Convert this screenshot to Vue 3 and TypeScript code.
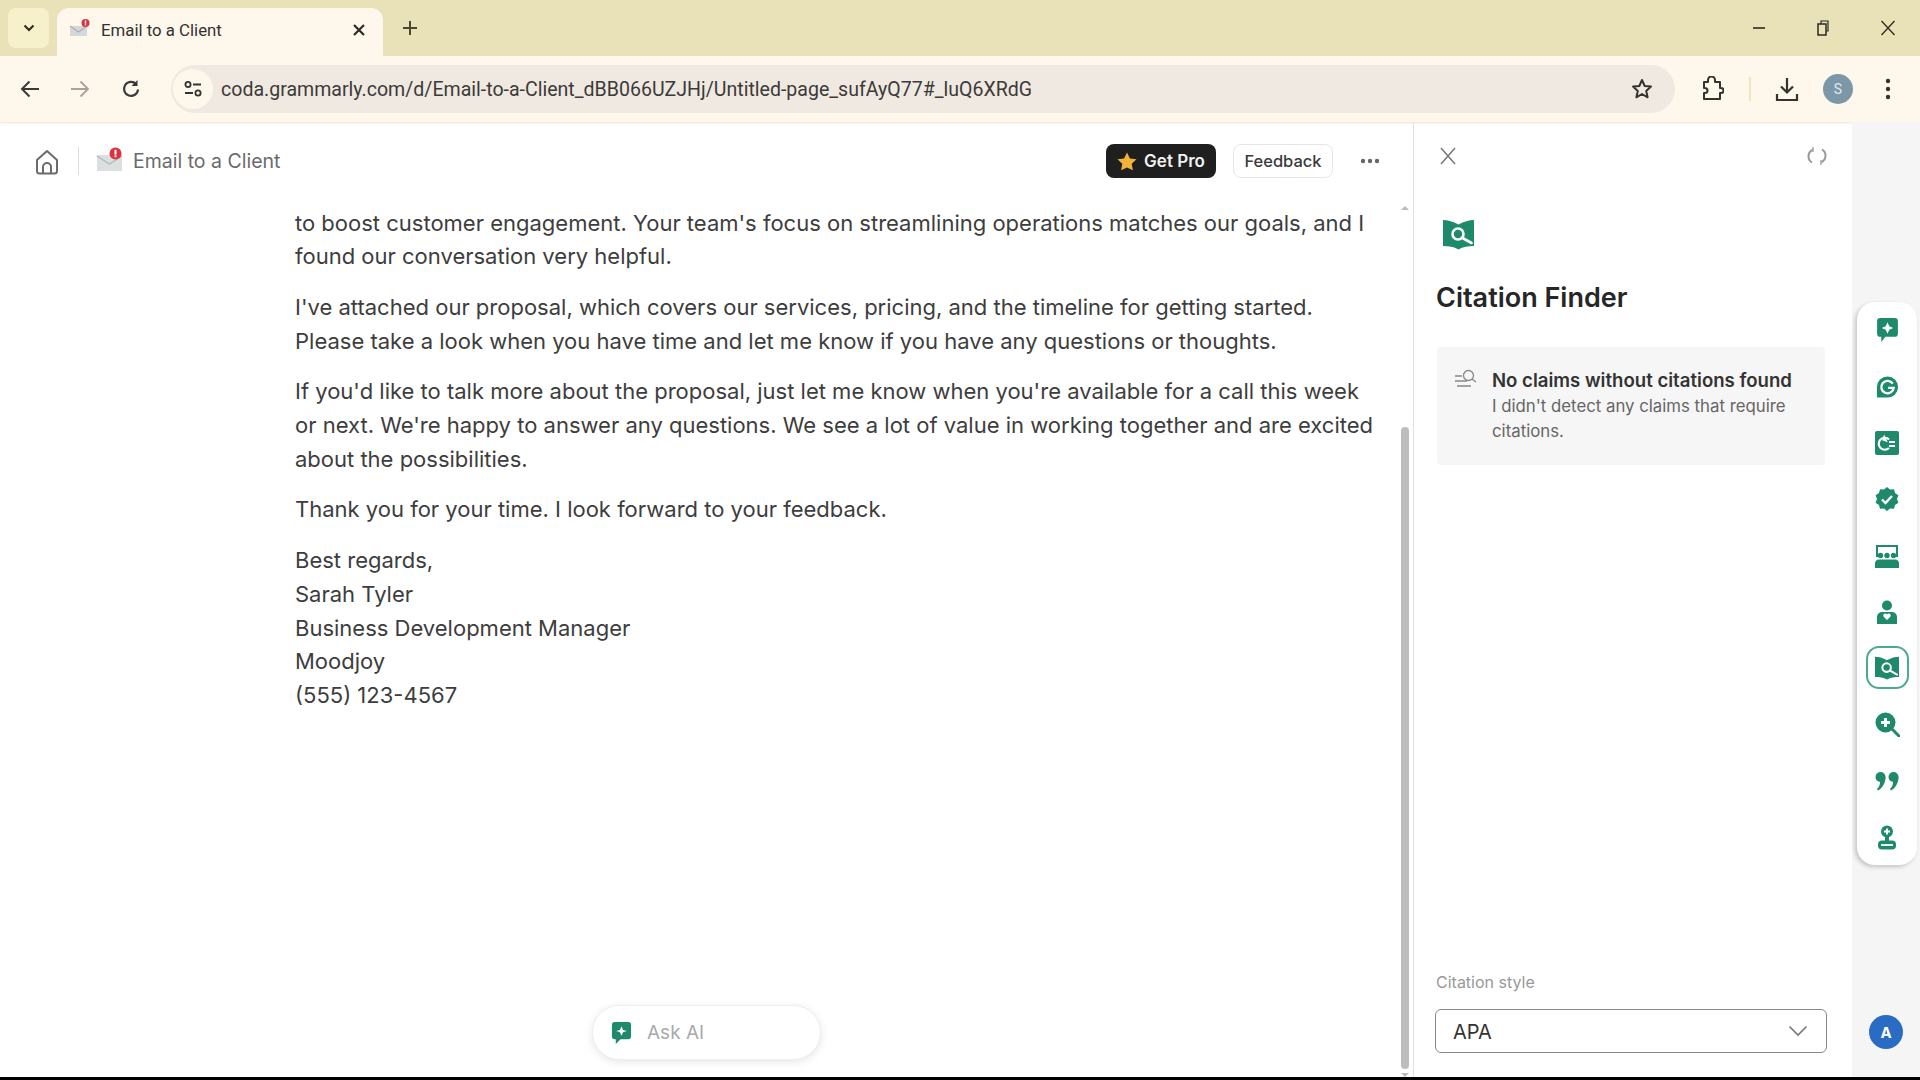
<script setup lang="ts">
const paragraphs: string[][] = [
  ["to boost customer engagement. Your team's focus on streamlining operations matches our goals, and I", "found our conversation very helpful."],
  ["I've attached our proposal, which covers our services, pricing, and the timeline for getting started.", "Please take a look when you have time and let me know if you have any questions or thoughts."],
  ["If you'd like to talk more about the proposal, just let me know when you're available for a call this week", "or next. We're happy to answer any questions. We see a lot of value in working together and are excited", "about the possibilities."],
  ["Thank you for your time. I look forward to your feedback."],
  ["Best regards,", "Sarah Tyler", "Business Development Manager", "Moodjoy", "(555) 123-4567"],
];
</script>

<template>
  <div class="screen">
    <div class="tabstrip">
      <div class="tabgroup">
        <svg width="12" height="8" viewBox="0 0 12 8"><path d="M1.5 1.5 6 6l4.5-4.5" fill="none" stroke="#2b2a20" stroke-width="2"/></svg>
      </div>
      <div class="tab">
        <svg class="fav" width="22" height="20" viewBox="0 0 22 20"><path d="M1 8h17v10H1z" fill="#d5d8d8"/><path d="M1 8l8.500 6L18 8" fill="none" stroke="#a9b0b0" stroke-width="1.200"/><circle cx="16.500" cy="5" r="4" fill="#d8343f"/><rect x="15.800" y="2.500" width="1.400" height="3.200" fill="#fff"/><rect x="15.800" y="6.200" width="1.400" height="1.200" fill="#fff"/></svg>
        <span class="tabtitle">Email to a Client</span>
        <svg class="tabx" width="12" height="12" viewBox="0 0 12 12"><path d="M1 1l10 10M11 1 1 11" stroke="#2b2a28" stroke-width="2.200"/></svg>
      </div>
      <svg class="plus" width="16" height="16" viewBox="0 0 16 16"><path d="M8 1v14M1 8h14" stroke="#4a4630" stroke-width="2"/></svg>
      <div class="winctl">
        <svg width="14" height="14" viewBox="0 0 14 14"><path d="M1 7h12" stroke="#2b2a20" stroke-width="1.600"/></svg>
        <svg width="14" height="16" viewBox="0 0 14 16"><rect x="2" y="4" width="8" height="11" fill="none" stroke="#2b2a20" stroke-width="1.500"/><path d="M5 4V1h7v10h-2" fill="none" stroke="#2b2a20" stroke-width="1.200"/></svg>
        <svg width="16" height="16" viewBox="0 0 16 16"><path d="M1.500 1 14.500 15M14.500 1 1.500 15" stroke="#2b2a20" stroke-width="1.300"/></svg>
      </div>
    </div>

    <div class="toolbar">
      <svg class="nav" width="20" height="18" viewBox="0 0 20 18"><path d="M19 9H2M9.500 1.500 2 9l7.500 7.500" fill="none" stroke="#3a3a38" stroke-width="2"/></svg>
      <svg class="nav fwd" width="20" height="18" viewBox="0 0 20 18"><path d="M1 9h17M10.500 1.500 18 9l-7.500 7.500" fill="none" stroke="#a5a39c" stroke-width="1.800"/></svg>
      <svg class="nav rel" width="20" height="20" viewBox="0 0 20 20"><path d="M17 10.500A7 7 0 1 1 15 5" fill="none" stroke="#3a3a38" stroke-width="2.200"/><path d="M16.500 1v6h-6z" fill="#3a3a38"/></svg>
      <div class="omni">
        <span class="chip">
          <svg width="20" height="18" viewBox="0 0 20 18"><circle cx="5" cy="4.500" r="2.600" fill="none" stroke="#333" stroke-width="1.800"/><path d="M10 4.500h8M2 13h8" stroke="#333" stroke-width="2"/><circle cx="15" cy="13" r="2.600" fill="none" stroke="#333" stroke-width="1.800"/></svg>
        </span>
        <span class="url">coda.grammarly.com/d/Email-to-a-Client_dBB066UZJHj/Untitled-page_sufAyQ77#_luQ6XRdG</span>
        <svg class="star" width="24" height="24" viewBox="0 0 24 24"><path d="M12 3l2.700 6 6.300.600-4.800 4.300 1.400 6.400L12 17l-5.600 3.300 1.400-6.400L3 9.600 9.300 9z" fill="none" stroke="#35332f" stroke-width="2" stroke-linejoin="round"/></svg>
      </div>
      <div class="tb-right">
        <svg width="24" height="26" viewBox="0 0 24 26"><path d="M4 6h4V4a3 3 0 0 1 7 0v2h5v6h1a2.500 2.500 0 0 1 0 5h-1v6H4v-6h1a2.500 2.500 0 0 0 0-5H4z" fill="none" stroke="#35332f" stroke-width="2" stroke-linejoin="round"/></svg>
        <span class="tb-sep"></span>
        <svg width="24" height="26" viewBox="0 0 24 26"><path d="M12 2v14M6 10.500l6 6 6-6M2 18v6h20v-6" fill="none" stroke="#35332f" stroke-width="2.200"/></svg>
        <span class="avatar">S</span>
        <svg width="6" height="22" viewBox="0 0 6 22"><circle cx="3" cy="3" r="2.200" fill="#35332f"/><circle cx="3" cy="11" r="2.200" fill="#35332f"/><circle cx="3" cy="19" r="2.200" fill="#35332f"/></svg>
      </div>
    </div>

    <div class="page">
      <main class="main">
        <header class="head">
          <svg class="home" width="24" height="26" viewBox="0 0 24 26"><path d="M2 11 12 2l10 9v11a2.500 2.500 0 0 1-2.500 2.500h-15A2.500 2.500 0 0 1 2 22z" fill="none" stroke="#6b6b6b" stroke-width="2" stroke-linejoin="round"/><path d="M8 24v-6a4 4 0 0 1 8 0v6" fill="none" stroke="#6b6b6b" stroke-width="2"/></svg>
          <span class="head-sep"></span>
          <svg class="mail" width="27" height="25" viewBox="0 0 27 25"><path d="M1 8h25v16H1z" fill="#dcdfdf"/><path d="M1 9l12.500 8L26 9" fill="none" stroke="#b3b8b8" stroke-width="1.400"/><circle cx="19.500" cy="6.500" r="6" fill="#d8343f"/><rect x="18.500" y="2.800" width="2" height="4.800" fill="#fff"/><rect x="18.500" y="8.400" width="2" height="1.800" fill="#fff"/></svg>
          <span class="doc-title">Email to a Client</span>
          <button class="getpro">
            <svg width="20" height="19" viewBox="0 0 20 19"><path d="M10 .500l2.900 6 6.600.800-4.800 4.500 1.200 6.500L10 15.600l-5.900 2.700 1.200-6.500L.5 7.300l6.600-.800z" fill="#f2b33d"/></svg>
            Get Pro
          </button>
          <button class="feedback">Feedback</button>
          <svg class="dots" width="20" height="6" viewBox="0 0 20 6"><circle cx="3" cy="3" r="2.200" fill="#666"/><circle cx="10" cy="3" r="2.200" fill="#666"/><circle cx="17" cy="3" r="2.200" fill="#666"/></svg>
        </header>

        <div class="doc">
          <p v-for="(para, i) in paragraphs" :key="i" class="para">
            <span v-for="line in para" :key="line" class="line">{{ line }}</span>
          </p>
        </div>

        <div class="sb-arrow sb-up"></div>
        <div class="sb-thumb"></div>
        <div class="sb-arrow sb-down"></div>

        <div class="askai">
          <svg width="21" height="24" viewBox="0 0 22 25"><path d="M4 1h14a3 3 0 0 1 3 3v12a3 3 0 0 1-3 3h-8l-5 5v-5H4a3 3 0 0 1-3-3V4a3 3 0 0 1 3-3z" fill="#1f8a6b"/><path d="M11 5.500l1.600 3.900 3.900 1.100-3.900 1.100L11 15.500l-1.600-3.900-3.900-1.100 3.900-1.100z" fill="#fff"/></svg>
          <span>Ask AI</span>
        </div>
      </main>

      <aside class="panel">
        <div class="panel-top">
          <svg width="16" height="18" viewBox="0 0 16 18"><path d="M1 1l14 16M15 1 1 17" stroke="#777" stroke-width="1.500"/></svg>
          <svg width="20" height="20" viewBox="0 0 20 20"><path d="M6 3.500C3 5 1.500 7.500 1.500 10.500c0 2.500 1.200 4.700 3.500 6" fill="none" stroke="#999" stroke-width="2"/><path d="M14 16.500c3-1.500 4.500-4 4.500-7 0-2.500-1.200-4.700-3.500-6" fill="none" stroke="#999" stroke-width="2"/><path d="M6 1v5M14 14v5" stroke="#aaa" stroke-width="1.500"/></svg>
        </div>
        <svg class="book" width="33" height="31" viewBox="0 0 33 31"><path d="M1 1c5 0 10 1.500 15.500 4.500C22 2.500 27 1 32 1v26c-6 0-11 .5-15.500 3.500C12 27.500 7 27 1 27z" fill="#1f8a6b"/><circle cx="16" cy="15" r="5.500" fill="#1f8a6b" stroke="#fff" stroke-width="2.600"/><path d="M20.500 19l9 5" stroke="#fff" stroke-width="2.600" stroke-linecap="round"/></svg>
        <h1 class="title">Citation Finder</h1>
        <div class="info">
          <svg class="info-ic" width="23" height="20" viewBox="0 0 23 20"><circle cx="14.500" cy="6.500" r="5" fill="none" stroke="#888" stroke-width="1.300"/><path d="M18 10l4 3M1 7h7M1 12h12M3 17h14" fill="none" stroke="#888" stroke-width="1.300"/></svg>
          <div>
            <div class="info-title">No claims without citations found</div>
            <div class="info-body">I didn't detect any claims that require citations.</div>
          </div>
        </div>
        <div class="spacer"></div>
        <label class="sel-label">Citation style</label>
        <div class="select">
          <span>APA</span>
          <svg width="20" height="12" viewBox="0 0 20 12"><path d="M1.500 1.500 10 10l8.500-8.500" fill="none" stroke="#777" stroke-width="1.600"/></svg>
        </div>
      </aside>

      <nav class="rail">
        <div class="rail-card">
          <span class="rb"><svg width="23" height="26" viewBox="0 0 22 25"><path d="M4 1h14a3 3 0 0 1 3 3v12a3 3 0 0 1-3 3H9l-4 5v-5H4a3 3 0 0 1-3-3V4a3 3 0 0 1 3-3z" fill="#1f8a6b"/><path d="M11 5l1.700 3.800L16.500 10.500l-3.800 1.700L11 16l-1.700-3.800L5.500 10.500l3.800-1.700z" fill="#fff"/></svg></span>
          <span class="rb"><svg width="23" height="24" viewBox="0 0 24 24"><path d="M12 1a11 11 0 1 1 0 22H1V12A11 11 0 0 1 12 1z" fill="#1f8a6b"/><path d="M17.500 8.500A6.500 6.500 0 1 0 18.500 13H12.500" fill="none" stroke="#fff" stroke-width="2.400"/></svg></span>
          <span class="rb"><svg width="24" height="24" viewBox="0 0 24 24"><rect width="24" height="24" rx="2" fill="#1f8a6b"/><path d="M14 8.500a6 6 0 1 0 0 8.500" fill="none" stroke="#fff" stroke-width="2.200"/><path d="M8 4v6h6z" fill="#fff" transform="rotate(20 10 7)"/><path d="M14 11h6M14 15h6" stroke="#fff" stroke-width="2"/></svg></span>
          <span class="rb"><svg width="24" height="24" viewBox="0 0 24 24"><path d="M12 0l3 2.500 4-.3 1 3.800 3.400 2.200L22 12l1.400 3.800L20 18l-1 3.800-4-.3L12 24l-3-2.500-4 .3L4 18 .6 15.800 2 12 .6 8.200 4 6l1-3.800 4 .3z" fill="#1f8a6b"/><path d="M7 12.500l3.500 3.500L17 9" fill="none" stroke="#fff" stroke-width="2.400"/></svg></span>
          <span class="rb"><svg width="24" height="24" viewBox="0 0 24 24"><path d="M2 13V2h20v11" fill="none" stroke="#1f8a6b" stroke-width="2"/><circle cx="5.500" cy="11.500" r="2.700" fill="#1f8a6b"/><circle cx="12" cy="11.500" r="2.700" fill="#1f8a6b"/><circle cx="18.500" cy="11.500" r="2.700" fill="#1f8a6b"/><path d="M0 24v-4a4 4 0 0 1 4-4.500h16a4 4 0 0 1 4 4.500v4z" fill="#1f8a6b"/></svg></span>
          <span class="rb"><svg width="22" height="25" viewBox="0 0 22 25"><circle cx="11" cy="5.500" r="5" fill="#1f8a6b"/><path d="M1 24v-7a5 5 0 0 1 5-5h10a5 5 0 0 1 5 5v7z" fill="#1f8a6b"/><path d="M11 20l-3.500-3.500a2 2 0 0 1 3.500-2 2 2 0 0 1 3.500 2z" fill="#fff"/></svg></span>
          <span class="rb active"><svg width="26" height="24" viewBox="0 0 33 31"><path d="M1 1c5 0 10 1.500 15.500 4.500C22 2.500 27 1 32 1v26c-6 0-11 .5-15.500 3.500C12 27.500 7 27 1 27z" fill="#1f8a6b"/><circle cx="16" cy="15" r="5.500" fill="#1f8a6b" stroke="#fff" stroke-width="2.600"/><path d="M20.500 19l9 5" stroke="#fff" stroke-width="2.600" stroke-linecap="round"/></svg></span>
          <span class="rb"><svg width="25" height="25" viewBox="0 0 25 25"><circle cx="10.500" cy="10.500" r="10" fill="#1f8a6b"/><path d="M10.500 6v9M6 10.500h9" stroke="#fff" stroke-width="3"/><path d="M17 17l7 7" stroke="#1f8a6b" stroke-width="3" stroke-linecap="round"/></svg></span>
          <span class="rb"><svg width="24" height="20" viewBox="0 0 24 20"><circle cx="5.500" cy="6" r="5" fill="#1f8a6b"/><circle cx="18.500" cy="6" r="5" fill="#1f8a6b"/><path d="M10.500 6c0 6-3 11-7.500 13.500L2 18c2-2 3-4 3-7zM23.500 6c0 6-3 11-7.500 13.500L15 18c2-2 3-4 3-7z" fill="#1f8a6b"/></svg></span>
          <span class="rb"><svg width="20" height="25" viewBox="0 0 20 25"><circle cx="10" cy="6.500" r="6" fill="#1f8a6b"/><path d="M10 3.500v6M7 6.500h6" stroke="#fff" stroke-width="2"/><path d="M8 12h4v4H8z" fill="#1f8a6b"/><rect x="1" y="15.500" width="18" height="9" rx="4" fill="#1f8a6b"/><path d="M4 20h12" stroke="#fff" stroke-width="1.800"/></svg></span>
        </div>
        <span class="user">A</span>
      </nav>
    </div>
    <div class="blackbar"></div>
  </div>
</template>

<style scoped>
.screen { width: 1920px; height: 1080px; display: flex; flex-direction: column; overflow: hidden; background: #fff; font-family: Inter, "Liberation Sans", sans-serif; color: #3a3a3a; }
.tabstrip { height: 56px; flex: none; background: #e9e2b9; display: flex; align-items: flex-start; padding-left: 8px; }
.tabgroup { width: 41px; height: 40px; margin-top: 8px; border-radius: 8px; background: #f6f0cb; display: flex; align-items: center; justify-content: center; }
.tab { width: 326px; height: 48px; margin: 8px 0 0 8px; background: #fdf7ec; border-radius: 12px 12px 0 0; display: flex; align-items: center; padding: 0 18px 0 12px; box-sizing: border-box; }
.fav { margin-top: -8px; }
.tabtitle { margin-left: 10px; margin-top: -5px; font: 16.8px "Roboto", "Liberation Sans", sans-serif; color: #34322c; flex: 1; }
.tabx { margin-top: -4px; }
.plus { margin: 20px 0 0 19px; }
.winctl { margin-left: auto; display: flex; align-items: center; gap: 50px; height: 56px; padding-right: 24px; }
.toolbar { height: 66px; flex: none; background: #fdf7ec; display: flex; align-items: center; padding-left: 20px; box-shadow: 0 1px 2px #e8e4dc; position: relative; }
.nav { flex: none; }
.fwd { margin-left: 30px; }
.rel { margin-left: 31px; }
.omni { margin-left: 30px; width: 1504px; height: 48px; border-radius: 24px; background: #f0e9e2; display: flex; align-items: center; }
.chip { width: 40px; height: 40px; margin-left: 2px; border-radius: 20px; background: #fdf7ec; display: flex; align-items: center; justify-content: center; flex: none; }
.url { margin-left: 8px; font: 19.56px "Roboto", "Liberation Sans", sans-serif; color: #3c3a38; flex: 1; white-space: nowrap; }
.star { margin-right: 21px; }
.tb-right { margin-left: 25px; display: flex; align-items: center; }
.tb-sep { width: 2px; height: 24px; background: #efe7b5; margin: 0 24px 0 25px; }
.avatar { width: 30px; height: 30px; margin: 0 32px 0 24px; border-radius: 50%; background: #7c98a8; color: #dfe8ee; font: 14px "Roboto", sans-serif; display: flex; align-items: center; justify-content: center; }
.page { flex: 1; min-height: 0; display: flex; }
.main { width: 1413px; flex: none; position: relative; display: flex; flex-direction: column; overflow: hidden; }
.head { height: 78px; flex: none; display: flex; align-items: center; padding-left: 35px; box-sizing: border-box; }
.home { margin-top: 1px; }
.head-sep { width: 1px; height: 28px; background: #ddd; margin: 0 17px 0 19px; }
.mail { margin-top: -4px; }
.doc-title { margin-left: 10px; font-size: 19.5px; color: #6a6a6a; }
.getpro { margin-left: auto; width: 110px; height: 34px; background: #1f1f1f; color: #f1f1f1; border: 0; border-radius: 8px; font: 600 17px Inter, sans-serif; display: flex; align-items: center; justify-content: center; gap: 7px; padding: 0; }
.feedback { margin-left: 17px; width: 100px; height: 34px; background: #fff; border: 1px solid #e6e6e6; border-radius: 8px; color: #3a3a3a; font: 500 16.5px Inter, sans-serif; padding: 0; }
.dots { margin: 0 33px 0 27px; }
.doc { padding: 6.5px 0 0 295px; font-size: 22px; line-height: 33.7px; color: #3d3d3d; }
.para { margin: 0 0 17px; }
.line { display: block; white-space: nowrap; }
.sb-thumb { position: absolute; right: 4px; top: 305px; bottom: 8px; width: 8px; border-radius: 4px; background: #bdbdbd; }
.sb-arrow { position: absolute; right: 4px; width: 0; height: 0; border-left: 4px solid transparent; border-right: 4px solid transparent; }
.sb-up { top: 84px; border-bottom: 4px solid #bbb; }
.sb-down { bottom: 0; border-top: 4px solid #bbb; }
.askai { position: absolute; left: 592px; bottom: 17px; width: 229px; height: 55px; border-radius: 28px; box-sizing: border-box; background: #fff; border: 1px solid #eee; box-shadow: 0 2px 8px rgba(0, 0, 0, 0.1); display: flex; align-items: center; padding-left: 18px; gap: 15px; font-size: 19px; color: #aaa; }
.panel { width: 439px; flex: none; box-sizing: border-box; border-left: 1px solid #e2e2e2; padding: 0 25px 24px 22px; display: flex; flex-direction: column; }
.panel-top { display: flex; justify-content: space-between; align-items: center; height: 20px; margin: 24px 0 0; padding: 0 0 0 4px; }
.book { margin: 53px 0 0 6px; }
.title { margin: 30px 0 0; font-size: 27px; line-height: 36px; font-weight: 600; color: #262626; }
.info { margin: 31px 0 0 1px; width: 388px; height: 118px; box-sizing: border-box; background: #f6f6f6; border-radius: 4px; padding: 22px 22px 0 17px; display: flex; gap: 15px; }
.info-ic { flex: none; }
.info-title { font-size: 18.6px; line-height: 24px; font-weight: 600; color: #333; white-space: nowrap; margin-top: -1px; }
.info-body { font-size: 16.8px; line-height: 25px; color: #666; margin-top: 2px; }
.spacer { flex: 1; }
.sel-label { font-size: 16px; line-height: 20px; color: #999; }
.select { margin: 17px 0 0 -1px; width: 392px; height: 44px; box-sizing: border-box; border: 1.5px solid #888; border-radius: 6px; display: flex; align-items: center; justify-content: space-between; padding: 0 18px 0 17px; font-size: 20px; color: #333; }
.select span { margin-top: 1px; }
.rail { flex: 1; background: #f5f5f5; display: flex; flex-direction: column; align-items: center; position: relative; }
.rail-card { margin-top: 180px; width: 60px; height: 563px; box-sizing: border-box; background: #fff; border-radius: 18px; box-shadow: -2px 2px 4px rgba(0, 0, 0, 0.2); display: flex; flex-direction: column; align-items: center; margin-left: 2px; }
.rb { height: 56.4px; width: 44px; flex: none; display: flex; align-items: center; justify-content: center; }
.active { height: 43px; margin: 5.7px 0 7.7px; width: 43px; box-sizing: border-box; border: 2px solid #4bab92; border-radius: 13px; }
.user { margin-top: auto; margin-bottom: 28px; width: 34px; height: 34px; border-radius: 50%; background: #2a6cc4; color: #fff; font-weight: 700; font-size: 15px; display: flex; align-items: center; justify-content: center; }
.blackbar { height: 3px; flex: none; background: #000; }
</style>
